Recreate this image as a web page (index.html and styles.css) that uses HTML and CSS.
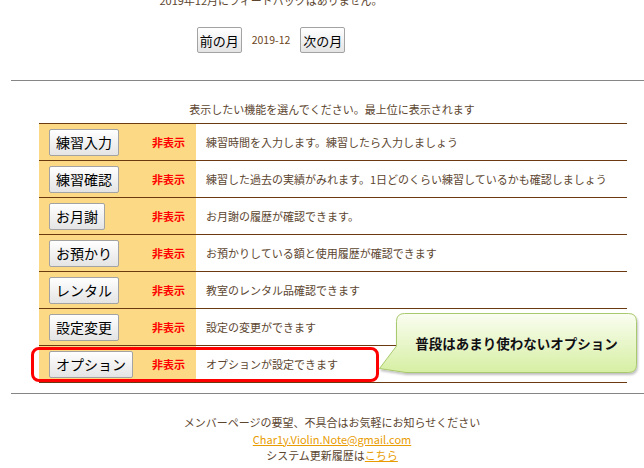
FILE: index.html
```html
<!DOCTYPE html>
<html lang="ja">
<head>
<meta charset="utf-8">
<title>メンバーページ</title>
<link rel="stylesheet" href="styles.css">
</head>
<body>
<div class="page">
  <section class="month">
    <p class="notice">2019年12月にフィードバックはありません。</p>
    <div class="month-nav">
      <button class="btn btn-sm">前の月</button>
      <span class="month-label">2019-12</span>
      <button class="btn btn-sm">次の月</button>
    </div>
  </section>

  <hr class="rule rule-top">

  <p class="lead">表示したい機能を選んでください。最上位に表示されます</p>

  <div class="features">
    <div class="row">
      <div class="side"><button class="btn">練習入力</button><span class="state">非表示</span></div>
      <div class="desc">練習時間を入力します。練習したら入力しましょう</div>
    </div>
    <div class="row">
      <div class="side"><button class="btn">練習確認</button><span class="state">非表示</span></div>
      <div class="desc">練習した過去の実績がみれます。1日どのくらい練習しているかも確認しましょう</div>
    </div>
    <div class="row">
      <div class="side"><button class="btn">お月謝</button><span class="state">非表示</span></div>
      <div class="desc">お月謝の履歴が確認できます。</div>
    </div>
    <div class="row">
      <div class="side"><button class="btn">お預かり</button><span class="state">非表示</span></div>
      <div class="desc">お預かりしている額と使用履歴が確認できます</div>
    </div>
    <div class="row">
      <div class="side"><button class="btn">レンタル</button><span class="state">非表示</span></div>
      <div class="desc">教室のレンタル品確認できます</div>
    </div>
    <div class="row">
      <div class="side"><button class="btn">設定変更</button><span class="state">非表示</span></div>
      <div class="desc">設定の変更ができます</div>
    </div>
    <div class="row row-marked">
      <div class="side"><button class="btn">オプション</button><span class="state">非表示</span></div>
      <div class="desc">オプションが設定できます</div>
      <span class="highlight"></span>
    </div>
  </div>

  <hr class="rule rule-bottom">

  <footer class="footer">
    <p>メンバーページの要望、不具合はお気軽にお知らせください</p>
    <p><a href="#" class="link">Char1y.Violin.Note@gmail.com</a></p>
    <p>システム更新履歴は<a href="#" class="link">こちら</a></p>
  </footer>
</div>

<div class="callout">
  <svg class="callout-shape" width="266" height="70" viewBox="0 0 266 70">
    <defs>
      <linearGradient id="cg" x1="0" y1="0" x2="0" y2="1">
        <stop offset="0" stop-color="#fafdf1"/>
        <stop offset="1" stop-color="#d6efa3"/>
      </linearGradient>
      <filter id="sh" x="-10%" y="-10%" width="120%" height="130%">
        <feDropShadow dx="1" dy="2" stdDeviation="1.2" flood-color="#000" flood-opacity="0.25"/>
      </filter>
    </defs>
    <path d="M28.5,3.5 H252.5 Q260.5,3.5 260.5,11.5 V54.5 Q260.5,62.5 252.5,62.5 H30 L3.5,58.5 L20.5,36 V11.5 Q20.5,3.5 28.5,3.5 Z" fill="url(#cg)" stroke="#a9c96e" stroke-width="1" filter="url(#sh)"/>
  </svg>
  <span class="callout-text">普段はあまり使わないオプション</span>
</div>
</body>
</html>
```

FILE: styles.css
```css
html, body {
  margin: 0;
  padding: 0;
  overflow: hidden;
  background: #ffffff;
}

body {
  font-family: "Noto Sans CJK JP", "Noto Sans", sans-serif;
  font-size: 11px;
  color: #5c4630;
  position: relative;
  width: 644px;
  height: 468px;
}

.page {
  margin-left: 11px;
  width: 642px;
}

p {
  margin: 0;
}

.month {
  width: 520px;
  text-align: center;
}

.notice {
  line-height: 16px;
  margin-top: -8px;
}

.month-nav {
  margin-top: 19px;
  display: flex;
  justify-content: center;
  align-items: center;
  gap: 10px;
}

.month-label {
  color: #6b4520;
  font-size: 10.5px;
  line-height: 16px;
}

.btn {
  font-family: "Noto Sans CJK JP", sans-serif;
  font-size: 14px;
  line-height: 1;
  color: #000;
  background: linear-gradient(#ffffff, #e4e4e4);
  border: 1px solid #a3a3a3;
  border-radius: 2px;
  height: 27px;
  padding: 0 6px;
  margin: 0;
  box-sizing: border-box;
}

.btn-sm {
  font-size: 13px;
  height: 26px;
  width: 45px;
  padding: 0;
}

.rule {
  border: 0;
  border-top: 1px solid #868686;
  height: 0;
  margin: 0;
}

.rule-top {
  margin-top: 27px;
}

.rule-bottom {
  margin-top: 10px;
}

.lead {
  text-align: center;
  line-height: 16px;
  margin: 20px 0 6px;
}

.features {
  margin: 0 26px 0 28px;
  border-top: 1px solid #6b3a10;
}

.row {
  display: grid;
  grid-template-columns: 157px 1fr;
  height: 36px;
  border-bottom: 1px solid #6b3a10;
  position: relative;
}

.side {
  background: #fcd984;
  display: flex;
  align-items: center;
  justify-content: space-between;
  padding: 0 11px 0 10px;
}

.state {
  color: #ff0000;
  font-weight: bold;
  font-size: 11px;
}

.desc {
  display: flex;
  align-items: center;
  padding-left: 10px;
  color: #5c4630;
}

.highlight {
  position: absolute;
  left: -8px;
  top: 1px;
  width: 348px;
  height: 35px;
  box-sizing: border-box;
  border: 3px solid #ff0000;
  border-radius: 8px;
}

.footer {
  padding-top: 20px;
  text-align: center;
  line-height: 16.5px;
}

.link {
  color: #e89c00;
  text-decoration: underline;
}

.callout {
  position: absolute;
  left: 376px;
  top: 310px;
  width: 266px;
  height: 70px;
}

.callout-shape {
  display: block;
}

.callout-text {
  position: absolute;
  left: 20px;
  top: 3px;
  width: 241px;
  height: 59px;
  display: flex;
  align-items: center;
  justify-content: center;
  font-size: 13.5px;
  font-weight: bold;
  color: #111;
  text-shadow: 0 0 1px rgba(255,255,255,0.6);
}
```
